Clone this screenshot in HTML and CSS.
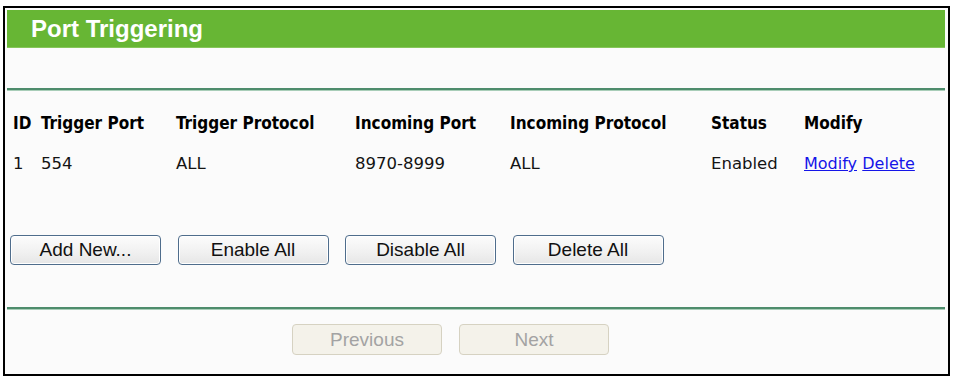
FILE: index.html
```html
<!DOCTYPE html>
<html>
<head>
<meta charset="utf-8">
<title>Port Triggering</title>
<link rel="stylesheet" href="styles.css">
</head>
<body>
<div class="frame">
  <div class="title">Port Triggering</div>
  <div class="spacer"></div>
  <div class="rule"></div>
  <div class="table">
    <div class="row head">
      <div>ID</div>
      <div>Trigger Port</div>
      <div>Trigger Protocol</div>
      <div>Incoming Port</div>
      <div>Incoming Protocol</div>
      <div>Status</div>
      <div>Modify</div>
    </div>
    <div class="row data">
      <div>1</div>
      <div>554</div>
      <div>ALL</div>
      <div>8970-8999</div>
      <div>ALL</div>
      <div>Enabled</div>
      <div class="links"><a href="#">Modify</a> <a href="#">Delete</a></div>
    </div>
  </div>
  <div class="actions">
    <button class="btn">Add New...</button>
    <button class="btn">Enable All</button>
    <button class="btn">Disable All</button>
    <button class="btn">Delete All</button>
  </div>
  <div class="rule"></div>
  <div class="pager">
    <button class="btn disabled" disabled>Previous</button>
    <button class="btn disabled" disabled>Next</button>
  </div>
</div>
</body>
</html>
```

FILE: styles.css
```css
html, body {
  margin: 0;
  padding: 0;
  background: #ffffff;
}

.frame {
  margin: 6px 0 0 3px;
  width: 947px;
  height: 370px;
  box-sizing: border-box;
  border: 2px solid #000000;
  padding: 2px 3px 2px 2px;
  background: #fbfbfb;
}

.title {
  height: 38px;
  line-height: 38px;
  background: #67b634;
  color: #ffffff;
  font-family: "Liberation Sans", Arial, sans-serif;
  font-weight: bold;
  font-size: 24px;
  padding-left: 24px;
  box-shadow: inset 0 -1px 0 #86c65a;
}

.spacer {
  height: 40px;
}

.rule {
  height: 2px;
  background: #4e8c6c;
  border-bottom: 1px solid #a8cdb8;
}

.table {
  padding: 22px 0 0 6px;
}

.row {
  display: grid;
  grid-template-columns: 28px 135px 179px 155px 201px 93px auto;
  line-height: 20px;
  white-space: nowrap;
}

.head {
  font-family: "DejaVu Sans Condensed", "DejaVu Sans", sans-serif;
  font-stretch: condensed;
  font-weight: bold;
  font-size: 17px;
  color: #000000;
}

.data {
  margin-top: 21px;
  font-family: "DejaVu Sans", sans-serif;
  font-size: 16.5px;
  color: #141414;
}

.links a {
  color: #1515e8;
  text-decoration: underline;
  font-size: 16px;
}

.actions {
  display: flex;
  gap: 16.5px;
  padding: 61px 0 0 3px;
  height: 30px;
  margin-bottom: 42px;
}

.btn {
  width: 151px;
  height: 30px;
  margin: 0;
  padding: 0;
  font-family: "Liberation Sans", Arial, sans-serif;
  font-size: 19px;
  color: #111111;
  background: linear-gradient(#fcfcfc, #f0f0f0 60%, #e6e6e6);
  border: 1px solid #4f6d8c;
  border-radius: 4px;
  box-shadow: inset 0 0 0 1px #ffffff;
}

.pager {
  display: flex;
  gap: 17px;
  padding: 14px 0 0 285px;
}

.btn.disabled {
  width: 150px;
  height: 31px;
  color: #a3a3a3;
  background: #f4f2ea;
  border: 1px solid #d6d2c2;
  box-shadow: none;
}
```
